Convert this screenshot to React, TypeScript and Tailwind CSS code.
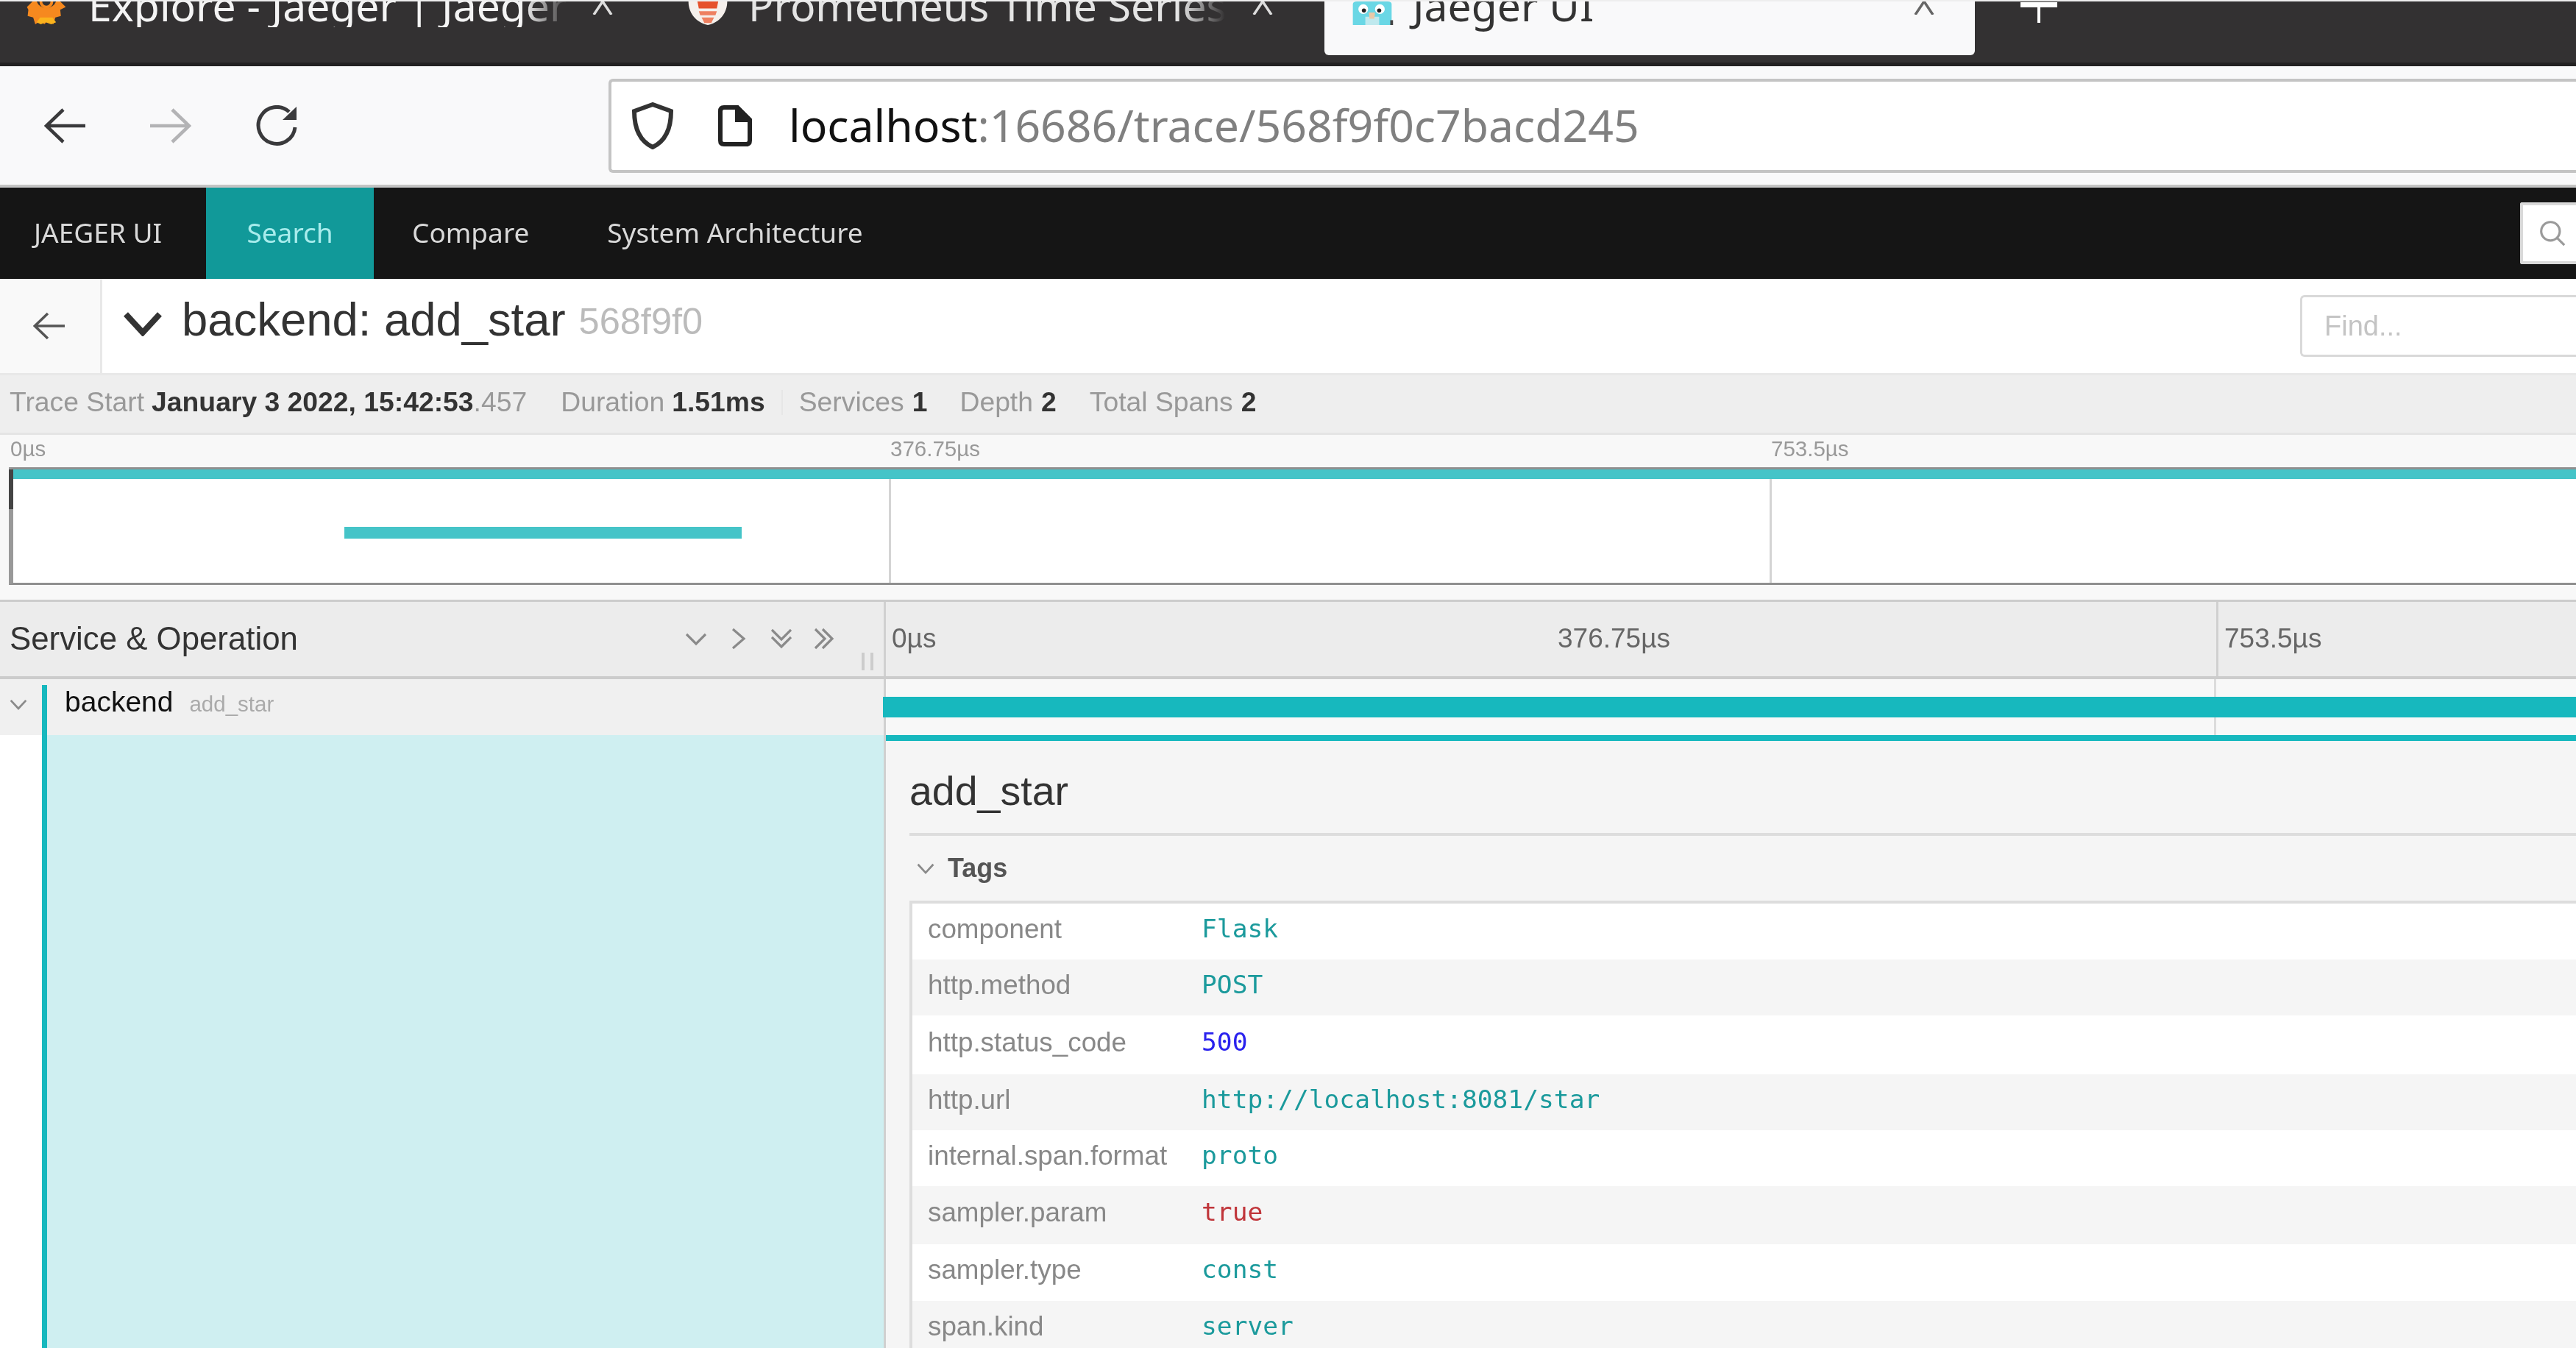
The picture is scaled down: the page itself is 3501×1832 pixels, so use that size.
import React from "react";

const sans = "font-['Liberation_Sans',sans-serif]";
const ui = "font-['Noto_Sans',sans-serif]";

const rows: { k: string; v: string; c: string; h: string }[] = [
  { k: "component", v: "Flask", c: "text-[#1b9a9c]", h: "h-[76px] bg-white" },
  { k: "http.method", v: "POST", c: "text-[#1b9a9c]", h: "h-[76px] bg-[#f5f5f5]" },
  { k: "http.status_code", v: "500", c: "text-[#2a22ee]", h: "h-[80px] bg-white" },
  { k: "http.url", v: "http://localhost:8081/star", c: "text-[#1b9a9c]", h: "h-[76px] bg-[#f5f5f5]" },
  { k: "internal.span.format", v: "proto", c: "text-[#1b9a9c]", h: "h-[76px] bg-white" },
  { k: "sampler.param", v: "true", c: "text-[#c0353a]", h: "h-[79px] bg-[#f5f5f5]" },
  { k: "sampler.type", v: "const", c: "text-[#1b9a9c]", h: "h-[77px] bg-white" },
  { k: "span.kind", v: "server", c: "text-[#1b9a9c]", h: "h-[77px] bg-[#f5f5f5]" },
];

function Arrow({ dir, color, className }: { dir: "l" | "r"; color: string; className: string }) {
  return (
    <svg viewBox="0 0 56 48" className={className} fill="none" stroke={color} strokeWidth="4.5">
      {dir === "l" ? <path d="M56 24H3M26 2L3 24l23 22" /> : <path d="M0 24h53M30 2l23 22-23 22" />}
    </svg>
  );
}

function Grafana() {
  return (
    <svg viewBox="0 0 60 34" className="h-[32px] w-[60px] shrink-0">
      <path d="M2 8l8-8h40l8 8-8 4 1 9-8 2-3 10-8-5-5 5-5-5-8 5-3-10-8-2 1-9z" fill="#f6891f" />
      <path d="M16 30l5-7h18l5 7-7 3-8-3-7 3z" fill="#fbb31d" />
      <path d="M16 0a15 15 0 0 0 28 0" fill="#333132" />
      <path d="M22 0a8 8 0 0 0 16 0" fill="none" stroke="#f6891f" strokeWidth="4" />
    </svg>
  );
}

function Prometheus() {
  return (
    <svg viewBox="0 0 58 34" className="h-[32px] w-[58px] shrink-0">
      <path d="M1 0h56c0 16-10 30-28 34C11 30 1 16 1 0z" fill="#f5f0ec" />
      <path d="M14 0h30l-2 10H16z" fill="#e6522c" />
      <path d="M16 14h26l-2 6H18zM20 23h18l-4 8h-10z" fill="#ee8060" />
    </svg>
  );
}

function Gopher() {
  return (
    <svg viewBox="0 0 60 34" className="h-[32px] w-[60px] shrink-0">
      <path d="M2 4q0-4 6-4h44q6 0 6 4v30H2z" fill="#6ad7e5" />
      <path d="M20 22h20v12H20z" fill="#bfe9ee" />
      <circle cx="17" cy="11" r="7" fill="#fff" />
      <circle cx="41" cy="11" r="7" fill="#fff" />
      <circle cx="18" cy="13" r="3" fill="#222" />
      <circle cx="40" cy="13" r="3" fill="#222" />
      <path d="M25 16h9l-1 9h-7z" fill="#e9c9a8" />
      <path d="M56 27h4v7h-4z" fill="#444" />
    </svg>
  );
}

function TabClose({ color, className }: { color: string; className: string }) {
  return (
    <svg viewBox="0 0 30 18" className={`h-[18px] w-[30px] shrink-0 ${className}`} fill="none" stroke={color} strokeWidth="3.5">
      <path d="M3 18L15 0L27 18" />
    </svg>
  );
}

function Chevron({ className, path }: { className: string; path: string }) {
  return (
    <svg viewBox="0 0 28 30" className={className} fill="none" stroke="#8a8a8a" strokeWidth="3.2">
      <path d={path} />
    </svg>
  );
}

export default function App() {
  return (
    <div className={`flex h-[1832px] w-[3501px] flex-col overflow-hidden bg-white blur-[0.7px] ${sans}`}>
      {/* browser tabs */}
      <div className={`flex h-[90px] shrink-0 overflow-hidden border-t-2 border-b-[5px] border-t-[#eeeeee] border-b-[#232122] bg-[#333132] text-[57px] leading-[60px] ${ui}`}>
        <div className="flex w-[870px] shrink-0 items-start pl-[33px]">
          <Grafana />
          <div className="relative -mt-[25px] ml-[27px] w-[652px] overflow-hidden whitespace-nowrap text-[#f4f4f4]">
            Explore - Jaeger | Jaeger
            <div className="absolute inset-y-0 right-0 w-[60px] bg-gradient-to-r from-transparent to-[#333132]" />
          </div>
          <TabClose color="#dddddd" className="ml-[32px]" />
        </div>
        <div className="flex w-[930px] shrink-0 items-start pl-[63px]">
          <Prometheus />
          <div className="relative -mt-[25px] ml-[26px] w-[648px] overflow-hidden whitespace-nowrap text-[#e4e4e4]">
            Prometheus Time Series (
            <div className="absolute inset-y-0 right-0 w-[60px] bg-gradient-to-r from-transparent to-[#333132]" />
          </div>
          <TabClose color="#dddddd" className="ml-[36px]" />
        </div>
        <div className="flex h-[73px] w-[884px] shrink-0 items-start rounded-b-[6px] bg-[#f9f9fa] pl-[35px]">
          <Gopher />
          <span className="-mt-[25px] ml-[25px] w-[680px] whitespace-nowrap text-[#333]">Jaeger UI</span>
          <TabClose color="#666666" className="" />
        </div>
        <svg viewBox="0 0 50 28" className="ml-[62px] mt-[1px] h-[28px] w-[50px] shrink-0" fill="none" stroke="#ffffff">
          <path d="M0 3.5h50" strokeWidth="7" />
          <path d="M25 0v28" strokeWidth="4" />
        </svg>
      </div>

      {/* browser toolbar */}
      <div className={`flex h-[165px] shrink-0 items-center border-b-4 border-[#c4c4c4] bg-[#f9f9fa] ${ui}`}>
        <div className="flex w-[827px] shrink-0 items-center pl-[60px]">
          <Arrow dir="l" color="#3a3a3c" className="h-[48px] w-[56px]" />
          <Arrow dir="r" color="#b3b3b5" className="ml-[88px] h-[48px] w-[56px]" />
          <svg viewBox="0 0 56 56" className="ml-[88px] h-[56px] w-[56px]" fill="none" stroke="#3a3a3c" strokeWidth="5">
            <path d="M53 30A25 25 0 1 1 45 9" />
            <path d="M36 20L55 2v18z" fill="#3a3a3c" stroke="none" />
          </svg>
        </div>
        <div className="flex h-[128px] flex-1 items-center rounded-l-[6px] border-y-4 border-l-4 border-[#c4c4c4] bg-white pl-[27px]">
          <svg viewBox="0 0 58 64" className="h-[64px] w-[58px]" fill="none" stroke="#333" strokeWidth="6">
            <path d="M29 3L4 12c0 22 6 40 25 49 19-9 25-27 25-49z" />
          </svg>
          <svg viewBox="0 0 46 56" className="ml-[60px] h-[56px] w-[46px]" fill="none" stroke="#222" strokeWidth="6">
            <path d="M3 8q0-5 5-5h18l17 17v28q0 5-5 5H8q-5 0-5-5z" />
            <path d="M26 3v17h17z" fill="#222" />
          </svg>
          <span className="ml-[50px] whitespace-nowrap text-[60.7px] leading-none text-[#111]">
            localhost<span className="text-[#808080]">:16686/trace/568f9f0c7bacd245</span>
          </span>
        </div>
      </div>

      {/* jaeger nav */}
      <div className={`flex h-[124px] shrink-0 items-center bg-[#151515] pb-[3px] text-[37px] text-[#d9d9d9] ${ui}`}>
        <span className="w-[280px] pl-[46px]">JAEGER UI</span>
        <span className="-mb-[3px] flex h-[124px] w-[228px] items-center justify-center bg-[#119999] pb-[3px] text-[#a8ecec]">Search</span>
        <span className="ml-[52px]">Compare</span>
        <span className="ml-[106px]">System Architecture</span>
        <div className="ml-auto mt-[3px] flex h-[84px] w-[76px] items-center rounded-l-[3px] border-y-4 border-l-4 border-[#d9d9d9] bg-white pl-[22px]">
          <svg viewBox="0 0 40 40" className="h-[36px] w-[36px]" fill="none" stroke="#9a9a9a" strokeWidth="3.5">
            <circle cx="17" cy="17" r="14" />
            <path d="M27 27l11 11" />
          </svg>
        </div>
      </div>

      {/* trace title */}
      <div className="flex h-[131px] shrink-0 border-b-[3px] border-[#e8e8e8]">
        <div className="flex w-[139px] shrink-0 items-center border-r-[3px] border-[#e8e8e8] bg-[#f9f9f9] pl-[45px]">
          <Arrow dir="l" color="#555" className="h-[40px] w-[43px]" />
        </div>
        <div className="flex flex-1 items-center pb-[6px]">
          <svg viewBox="0 0 52 34" className="ml-[29px] h-[34px] w-[52px]" fill="none" stroke="#333" strokeWidth="8">
            <path d="M3 4l23 25L49 4" />
          </svg>
          <span className="ml-[27px] -mt-[11px] text-[63.4px] leading-none text-[#333]">backend: add_star</span>
          <span className="ml-[18px] -mt-[6px] text-[50.5px] leading-none text-[#bbb]">568f9f0</span>
          <div className="ml-auto mt-[6px] flex h-[84px] w-[375px] items-center rounded-l-[6px] border-y-[3px] border-l-[3px] border-[#d9d9d9] pl-[30px] text-[38px] text-[#c4c4c4]">
            Find...
          </div>
        </div>
      </div>

      {/* stats */}
      <div className="flex h-[81px] shrink-0 items-center border-b-[3px] border-[#e4e4e4] bg-[#eeeeee] pb-[5px] pl-[13px] text-[37.3px] text-[#999]">
        <span>Trace Start</span>
        <span className="ml-[10px] font-bold text-[#333]">January 3 2022, 15:42:53</span>
        <span>.457</span>
        <span className="ml-[46px]">Duration</span>
        <span className="ml-[10px] font-bold text-[#333]">1.51ms</span>
        <span className="ml-[22px] h-[34px] w-[2px] bg-[#e6e6e6]" />
        <span className="ml-[22px]">Services</span>
        <span className="ml-[11px] font-bold text-[#333]">1</span>
        <span className="ml-[44px]">Depth</span>
        <span className="ml-[11px] font-bold text-[#333]">2</span>
        <span className="ml-[45px]">Total Spans</span>
        <span className="ml-[11px] font-bold text-[#333]">2</span>
      </div>

      {/* minimap */}
      <div className="flex h-[227px] shrink-0 flex-col border-b-[3px] border-[#cccccc] bg-[#f8f8f8]">
        <div className="flex h-[44px] shrink-0 items-center pb-[5px] pl-[14px] text-[29.5px] text-[#999]">
          <span className="w-[1196px]">0µs</span>
          <span className="w-[1197px]">376.75µs</span>
          <span>753.5µs</span>
        </div>
        <div className="relative ml-[12px] flex h-[160px] shrink-0 flex-col border-y-[3px] border-l-[6px] border-y-[#8f8f8f] border-l-[#999] bg-white">
          <div className="absolute -left-[6px] top-0 h-[54px] w-[6px] bg-[#444]" />
          <div className="h-[13px] shrink-0 bg-[#45c4c8]" />
          <div className="flex flex-1">
            <div className="w-[1193px] border-r-[3px] border-[#d4d4d4] pl-[450px] pt-[65px]">
              <div className="h-[16px] w-[540px] bg-[#45c4c8]" />
            </div>
            <div className="w-[1197px] border-r-[3px] border-[#d4d4d4]" />
          </div>
        </div>
      </div>

      {/* timeline header */}
      <div className="flex h-[105px] shrink-0 border-b-4 border-[#cccccc] bg-[#ececec]">
        <div className="relative flex w-[1204px] shrink-0 items-center border-r-[3px] border-[#d0d0d0] pb-[2px] pl-[13px]">
          <span className="flex-1 text-[43.8px] text-[#333]">Service &amp; Operation</span>
          <Chevron className="h-[30px] w-[28px]" path="M1 9l13 13L27 9" />
          <Chevron className="ml-[30px] h-[30px] w-[28px]" path="M6 2l15 13L6 28" />
          <Chevron className="ml-[30px] h-[30px] w-[28px]" path="M1 3l13 13L27 3M1 13l13 13 13-13" />
          <Chevron className="ml-[30px] mr-[67px] h-[30px] w-[28px]" path="M2 2l13 13L2 28M12 2l13 13-13 13" />
          <div className="absolute bottom-[8px] right-[14px] flex h-[24px] gap-[8px]">
            <div className="w-[4px] bg-[#cccccc]" />
            <div className="w-[4px] bg-[#cccccc]" />
          </div>
        </div>
        <div className="flex flex-1 items-stretch text-[37px] text-[#666]">
          <span className="ml-[8px] flex w-[905px] items-center pb-[2px]">0µs</span>
          <span className="flex w-[895px] items-center pb-[2px]">376.75µs</span>
          <span className="flex items-center border-l-[3px] border-[#d0d0d0] pb-[2px] pl-[8px]">753.5µs</span>
        </div>
      </div>

      {/* span row */}
      <div className="flex h-[76px] shrink-0">
        <div className="flex w-[1201px] shrink-0 bg-[#f0f0f0] pl-[4px]">
          <div className="flex w-[53px] shrink-0 items-center pb-[8px] pl-[9px]">
            <Chevron className="h-[26px] w-[24px]" path="M2 9l12 13L26 9" />
          </div>
          <div className="mt-[8px] w-[7px] shrink-0 bg-[#17b8be]" />
          <div className="flex items-baseline pl-[24px] pt-[2px]">
            <span className="text-[39px] text-[#111]">backend</span>
            <span className="ml-[22px] text-[29.5px] text-[#aaa]">add_star</span>
          </div>
        </div>
        <div className="relative flex flex-1 flex-col border-l-[3px] border-[#d0d0d0] bg-[#f8f8f8] pt-[24px]">
          <div className="absolute inset-y-0 left-[1805px] w-[3px] bg-[#dcdcdc]" />
          <div className="relative -ml-[4px] h-[28px] bg-[#17b8be]" />
        </div>
      </div>

      {/* detail */}
      <div className="flex flex-1">
        <div className="w-[57px] shrink-0 bg-white" />
        <div className="w-[7px] shrink-0 bg-[#17b8be]" />
        <div className="w-[1137px] shrink-0 bg-[#cfeff1]" />
        <div className="flex flex-1 flex-col border-l-[3px] border-[#d0d0d0] bg-[#f5f5f5]">
          <div className="h-[8px] shrink-0 bg-[#17b8be]" />
          <div className="flex flex-1 flex-col pl-[32px]">
            <div className="mt-[33px] text-[55.5px] leading-[70px] text-[#333]">add_star</div>
            <div className="mt-[22px] h-[4px] bg-[#dddddd]" />
            <div className="flex h-[88px] shrink-0 items-center pl-[9px]">
              <Chevron className="h-[26px] w-[26px]" path="M2 9l12 13L26 9" />
              <span className="ml-[17px] text-[36px] font-bold text-[#555]">Tags</span>
            </div>
            <div className="flex-1 border-l-4 border-t-4 border-[#dddddd]">
              {rows.map((r) => (
                <div key={r.k} className={`flex items-center pb-[7px] ${r.h}`}>
                  <span className="w-[393px] shrink-0 pl-[21px] text-[36.8px] text-[#888]">{r.k}</span>
                  <span className={`font-['DejaVu_Sans_Mono',monospace] text-[34.6px] ${r.c}`}>{r.v}</span>
                </div>
              ))}
            </div>
          </div>
        </div>
      </div>
    </div>
  );
}
